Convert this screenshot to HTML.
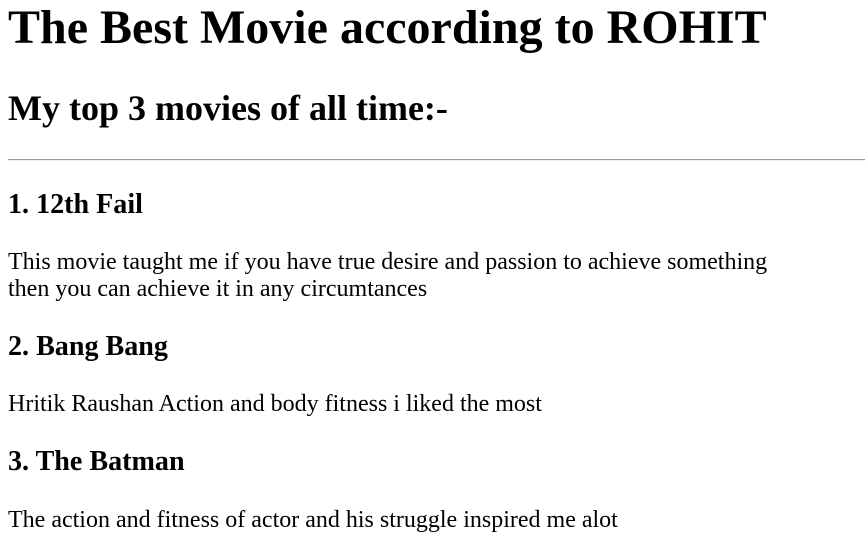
<!DOCTYPE html>
<html><head><style>
html,body{margin:0;padding:0;background:#fff}
body{margin:0 8px;font-family:"Liberation Serif",serif;font-size:24px;color:#000}
h1{margin-top:0}
hr{border:0;border-top:1px solid #9a9a9a;border-bottom:1px solid #eee;margin:12px -8px 12px 0}
</style></head><body>
<h1>The Best Movie according to ROHIT</h1>
<h2>My top 3 movies of all time:-</h2>
<hr>
<h3>1. 12th Fail</h3>
<p>This movie taught me if you have true desire and passion to achieve something<br>then you can achieve it in any circumtances</p>
<h3>2. Bang Bang</h3>
<p>Hritik Raushan Action and body fitness i liked the most</p>
<h3>3. The Batman</h3>
<p>The action and fitness of actor and his struggle inspired me alot</p>
</body></html>
